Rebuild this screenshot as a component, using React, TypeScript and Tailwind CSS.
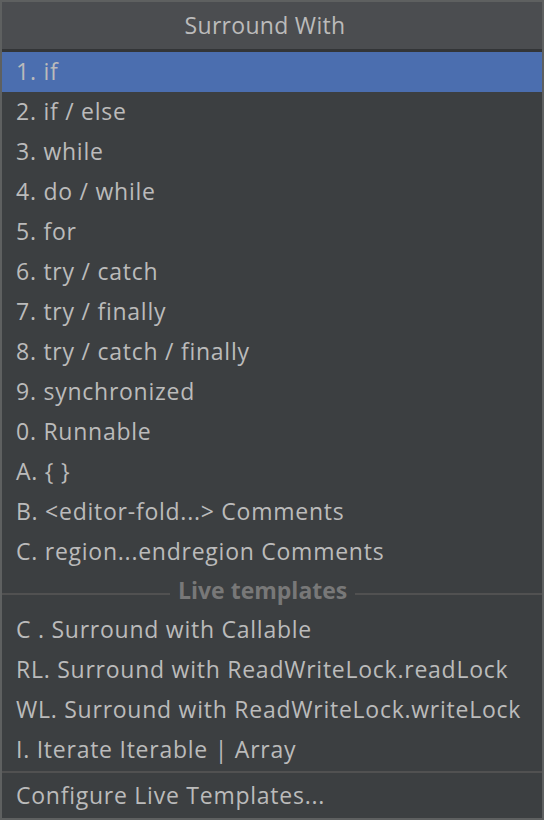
const ITEMS = [
  '1. if',
  '2. if / else',
  '3. while',
  '4. do / while',
  '5. for',
  '6. try / catch',
  '7. try / finally',
  '8. try / catch / finally',
  '9. synchronized',
  '0. Runnable',
  'A. { }',
  'B. <editor-fold...> Comments',
  'C. region...endregion Comments',
];

const LIVE = [
  'C . Surround with Callable',
  'RL. Surround with ReadWriteLock.readLock',
  'WL. Surround with ReadWriteLock.writeLock',
  'I. Iterate Iterable | Array',
];

export default function App() {
  return (
    <div
      className="w-[544px] h-[820px] border-2 border-[#5e6060] bg-[#3c3f41] text-[#bbbbbb] flex flex-col overflow-hidden"
      style={{ fontFamily: '"Open Sans", "Noto Sans", sans-serif' }}
    >
      {/* Title */}
      <div className="h-[47px] shrink-0 bg-[#4b4d50] flex items-center justify-center text-[23px] tracking-[0.3px] border-b-[3px] border-[#333537] box-content">
        <span className="pr-[14px]">Surround With</span>
      </div>

      {/* Actions */}
      <div className="flex flex-col">
        {ITEMS.map((item, i) => (
          <div
            key={item}
            className={`h-[40px] flex items-center pl-[14px] pb-[2px] text-[23px] tracking-[0.75px] whitespace-pre ${
              i === 0 ? 'bg-[#4b6eaf]' : ''
            }`}
          >
            {item}
          </div>
        ))}
      </div>

      {/* Live templates separator */}
      <div className="h-[38px] flex items-center gap-[8px] pb-[2px]">
        <div className="w-[168px] h-[2px] bg-[#515151] mt-[8px]" />
        <span className="text-[23px] font-bold text-[#787878]">Live templates</span>
        <div className="flex-1 h-[2px] bg-[#515151] mt-[8px]" />
      </div>

      <div className="flex flex-col">
        {LIVE.map((item) => (
          <div key={item} className="h-[40px] flex items-center pl-[14px] pb-[2px] text-[23px] tracking-[0.75px] whitespace-pre">
            {item}
          </div>
        ))}
      </div>

      <div className="h-[2px] bg-[#515151] mt-[1px]" />

      <div className="flex-1 flex items-center pl-[14px] text-[23px] tracking-[0.75px]">Configure Live Templates...</div>
    </div>
  );
}
